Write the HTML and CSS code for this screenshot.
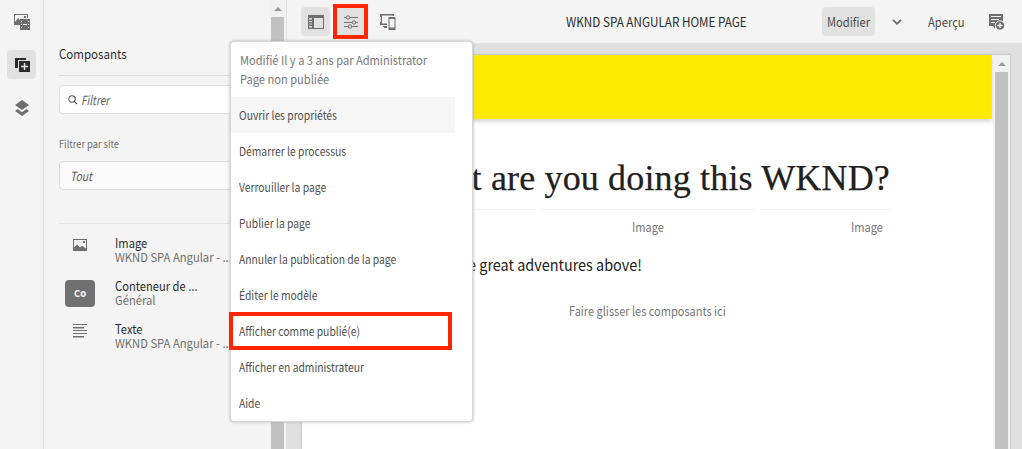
FILE: index.html
```html
<!DOCTYPE html>
<html lang="fr">
<head>
<meta charset="utf-8">
<title>WKND SPA Angular Home Page</title>
<link rel="stylesheet" href="styles.css">
</head>
<body>
<div class="app">
  <nav class="rail">
    <button class="rail-btn"><svg width="16" height="16" viewBox="0 0 16 16"><path fill="#6e6e6e" fill-rule="evenodd" d="M0 0h14v4h-1V1H1v7l3-4 2 2v5H0zM10 2h2v2h-2z"/><path fill="#6e6e6e" fill-rule="evenodd" d="M6 5h10v11H6zM7 7v1h1V7zm0 3v1h1v-1zm0 3v1h1v-1zm7-6v1h1V7zm0 3v1h1v-1zm0 3v1h1v-1zM9 10v1h4v-1z"/></svg></button>
    <button class="rail-btn rail-active"><svg width="16" height="16" viewBox="0 0 16 16"><path fill="#2c2c2c" d="M1 1h11v2H4v8H1z"/><path fill="#2c2c2c" fill-rule="evenodd" d="M5 4h11v11H5zM9.800 6v2.800H7v1.500h2.800v2.800h1.500v-2.800h2.800V8.800h-2.800V6z"/></svg></button>
    <button class="rail-btn"><svg width="16" height="16" viewBox="0 0 16 16"><path fill="#6e6e6e" d="M8 0l7 5-7 5-7-5zM3.500 9L8 12.200 12.500 9 15 11l-7 5-7-5z"/></svg></button>
  </nav>

  <aside class="panel">
    <div class="panel-body">
      <h2 class="panel-title"><span class="narrow">Composants</span></h2>
      <div class="field search"><svg width="10" height="10" viewBox="0 0 10 10" fill="none" stroke="#555" stroke-width="1.100"><circle cx="4" cy="4" r="3.200"/><path d="M6.300 6.300L9 9"/></svg><span class="narrow">Filtrer</span></div>
      <label class="label"><span class="narrow">Filtrer par site</span></label>
      <div class="field select"><span class="narrow">Tout</span></div>
      <ul class="components">
        <li class="component"><span class="thumb"><svg width="14" height="12" viewBox="0 0 14 12"><path fill="#6e6e6e" fill-rule="evenodd" d="M0 0h14v12H0zM1 1v8l3-3.500 3 3 2-1.500 4 2.500V1zM10 2h2v2h-2z"/><path fill="#6e6e6e" d="M1 8.500l3-3 3 3 2-1.500 4 3v1H1z"/></svg></span><span class="meta"><b class="narrow">Image</b><i class="narrow">WKND SPA Angular - ...</i></span></li>
        <li class="component"><span class="thumb chip">Co</span><span class="meta"><b class="narrow">Conteneur de ...</b><i class="narrow">Général</i></span></li>
        <li class="component"><span class="thumb"><svg width="14" height="14" viewBox="0 0 14 14" fill="#6e6e6e"><path d="M0 0h14v1H0zM0 3h11v1.500H0zM0 6h14v1H0zM0 9h14v1H0zM0 12h11v1.500H0z"/></svg></span><span class="meta"><b class="narrow">Texte</b><i class="narrow">WKND SPA Angular - ...</i></span></li>
      </ul>
    </div>
    <div class="scroll"><span class="arrow"></span><span class="grip"></span></div>
  </aside>

  <section class="main">
    <header class="bar">
      <div class="tools">
        <button class="tool tool-on"><svg width="16" height="14" viewBox="0 0 16 14"><path fill="#6e6e6e" fill-rule="evenodd" d="M0 0h16v14H0zM1 3v1.500h3V3zm0 3v1h3V6zm0 2.500v1h3v-1zM1 11v1.500h3V11zM6 3v10h9V3z"/></svg></button>
        <button class="tool tool-on tool-marked"><svg width="15" height="14" viewBox="0 0 15 14" fill="#e1e1e1" stroke="#707070"><path d="M1 2.500h14M1 7.500h14M1 11.500h14"/><circle cx="5" cy="2.500" r="1.700"/><circle cx="11" cy="7.500" r="1.700"/><circle cx="7" cy="11.500" r="1.700"/></svg></button>
        <button class="tool tool-devices"><svg width="17" height="17" viewBox="0 0 17 17"><path fill="#6e6e6e" d="M1 1h14v2h-1.500v-.5H3v8h5V12H1V9h.8V4H1zM4 13h4v2H5v-1H4z"/><path fill="#6e6e6e" fill-rule="evenodd" d="M9.500 4h7v13h-7zM10.500 6v8.500h5V6z"/></svg></button>
      </div>
      <h1 class="page-title"><span class="narrow">WKND SPA ANGULAR HOME PAGE</span></h1>
      <div class="modes">
        <button class="mode mode-on"><span class="narrow">Modifier</span></button>
        <svg class="chev" width="10" height="6" viewBox="0 0 10 6" fill="none" stroke="#6e6e6e" stroke-width="1.800"><path d="M1 .8l4 4 4-4"/></svg>
        <span class="preview narrow">Aperçu</span>
        <svg class="note" width="16" height="17" viewBox="0 0 16 17"><path fill="#6e6e6e" d="M0 0h14v8H9v4H6v3L4 12H0z"/><path stroke="#f4f4f4" d="M2 2.500h10M2 5.500h8M2 8.500h4"/><circle cx="11" cy="11.500" r="4.700" fill="#6e6e6e" stroke="#f4f4f4"/><path stroke="#f4f4f4" stroke-width="1.300" d="M8.500 11.500h5M11 9v5"/></svg>
      </div>
    </header>
    <div class="stage">
      <div class="frame">
        <article class="content">
          <div class="banner"></div>
          <h1 class="headline">t are you doing this WKND?</h1>
          <div class="images"><div></div><div><span class="narrow">Image</span></div><div><span class="narrow">Image</span></div></div>
          <p class="copy"><span class="narrow">e great adventures above!</span></p>
          <p class="drop"><span class="narrow">Faire glisser les composants ici</span></p>
        </article>
        <div class="scroll frame-scroll"><span class="arrow"></span><span class="grip"></span></div>
      </div>
    </div>
  </section>

  <div class="menu">
    <p class="menu-info"><span class="narrow">Modifié Il y a 3 ans par Administrator</span><span class="narrow">Page non publiée</span></p>
    <ul class="menu-list">
      <li class="hovered"><span class="narrow">Ouvrir les propriétés</span></li>
      <li><span class="narrow">Démarrer le processus</span></li>
      <li><span class="narrow">Verrouiller la page</span></li>
      <li><span class="narrow">Publier la page</span></li>
      <li><span class="narrow">Annuler la publication de la page</span></li>
      <li><span class="narrow">Éditer le modèle</span></li>
      <li class="marked"><span class="narrow">Afficher comme publié(e)</span></li>
      <li><span class="narrow">Afficher en administrateur</span></li>
      <li><span class="narrow">Aide</span></li>
    </ul>
  </div>
</div>
</body>
</html>
```
FILE: styles.css
```css
* { box-sizing: border-box; }
body, h1, h2, p, ul { margin: 0; padding: 0; }
ul { list-style: none; }
body { font-family: "Noto Sans CJK SC", "Noto Sans", sans-serif; font-size: 13px; color: #4b4b4b; background: #f4f4f4; overflow: hidden; }
button { border: 0; padding: 0; background: none; font: inherit; color: inherit; }
svg { display: block; flex: none; }
/* Condensed setting of the interface typeface */
.narrow { display: block; width: max-content; white-space: nowrap; transform: scaleX(var(--narrow, .86)); transform-origin: left center; }
.app { position: relative; display: flex; width: 1022px; height: 449px; overflow: hidden; }

.rail { width: 44px; border-right: 1px solid #dfdfdf; padding-top: 7px; display: flex; flex-direction: column; align-items: center; gap: 14px; }
.rail-btn { width: 29px; height: 29px; border-radius: 4px; display: flex; align-items: center; justify-content: center; }
.rail-active { background: #e1e1e1; }

.panel { width: 243px; border-right: 1px solid #e0e0e0; display: flex; }
.panel-body { width: 226px; padding-left: 15px; }
.panel-title { --narrow: .885; height: 76px; padding-top: 44px; font-size: 13px; font-weight: 400; line-height: 20px; color: #2c2c2c; border-bottom: 1px solid #dedede; }
.field { --narrow: .83; height: 29px; border: 1px solid #dcdcdc; border-radius: 4px; display: flex; align-items: center; font-size: 12.5px; font-style: italic; line-height: 20px; color: #606060; }
.search { --narrow: .8; margin-top: 9px; padding-left: 8px; gap: 3px; background: #fff; }
.label { --narrow: .91; display: block; margin-top: 21px; font-size: 10.2px; line-height: 18px; color: #6e6e6e; }
.select { margin-top: 8px; padding-left: 10px; background: #fafafa; }
.components { margin-top: 33px; border-top: 1px solid #e4e4e4; padding-top: 4px; }
.component { height: 43px; display: flex; align-items: center; gap: 20px; }
.thumb { width: 30px; height: 27px; margin-left: 6px; padding-bottom: 9px; display: flex; align-items: center; justify-content: center; }
.chip { margin-top: 1px; padding-bottom: 0; background: #707070; border-radius: 4px; color: #fff; font-size: 9.5px; font-weight: 700; }
.meta { display: flex; flex-direction: column; line-height: 14px; color: #6e6e6e; font-size: 12.2px; width: 120px; }
.meta b { --narrow: .86; font-weight: 400; color: #2c2c2c; font-size: 13px; }
.meta i { --narrow: .92; font-style: normal; }
.scroll { width: 15px; background: #f1f1f1; display: flex; flex-direction: column; align-items: center; }
.arrow { margin-top: 7px; border: 4px solid transparent; border-top: 0; border-bottom: 4px solid #9a9a9a; }
.grip { width: 13px; flex: 1; margin-top: 6px; background: #c1c1c1; }

.main { flex: 1; display: flex; flex-direction: column; }
.bar { height: 43px; display: flex; align-items: flex-start; }
.tools { width: 279px; padding: 4px 0 0 14px; display: flex; }
.tool { width: 29px; height: 29px; margin-top: 3px; border-radius: 4px; display: flex; align-items: center; justify-content: center; }
.tool-on { background: #e1e1e1; }
.tools .tool-marked { width: 35px; height: 35px; margin: 0 0 0 3px; border: 4px solid #fe2600; border-radius: 0; }
.tools .tool-devices { margin-left: 5px; }
.page-title { --narrow: .935; width: 256px; padding-top: 12px; font-size: 12.5px; font-weight: 400; line-height: 20px; color: #2c2c2c; }
.modes { --narrow: .86; display: flex; align-items: center; padding-top: 7px; font-size: 13px; }
.mode { width: 53px; height: 29px; padding-left: 5px; border-radius: 4px; }
.mode-on { background: #e1e1e1; }
.chev { margin-left: 17px; }
.modes .preview { width: 61px; margin-left: 26px; line-height: 20px; }
.note { margin-top: 2px; }
.stage { flex: 1; background: #e0e0e0; padding: 12px 12px 0 15px; display: flex; }
.frame { flex: 1; display: flex; background: #fff; box-shadow: 0 0 2px #999; }
.content { width: 691px; height: 394px; }
.banner { width: 690px; height: 64px; background: #ffea00; box-shadow: 0 2px 5px #ccc; }
.headline { height: 90px; margin-right: 103px; padding-top: 40px; font: 400 36px/38px "Liberation Serif", serif; letter-spacing: .16px; -webkit-text-stroke: .25px #202020; color: #202020; text-align: right; white-space: nowrap; }
.images { --narrow: .85; display: grid; grid-template-columns: 216px 216px 132px; gap: 3px; margin-left: 19px; line-height: 20px; color: #777; }
.images div { border-top: 1px solid #f4f4f4; padding-top: 7px; padding-left: 92px; height: 38px; }
.copy { --narrow: .93; display: flex; justify-content: flex-end; width: 340px; margin-top: 7px; font-size: 15.5px; line-height: 20px; color: #202020; }
.copy .narrow { transform-origin: right center; }
.drop { --narrow: .845; margin: 27px 0 0 267px; line-height: 20px; color: #777; }
.frame-scroll { width: 17px; }

.menu { position: absolute; left: 230px; top: 41px; width: 243px; height: 381px; background: #fff; border: 1px solid #d7d7d7; border-radius: 4px; box-shadow: 0 0 3px #aaa; color: #4f4f4f; font-size: 12px; }
.menu-info { --narrow: .925; height: 55px; padding: 8px 0 0 9px; line-height: 19px; color: #777; }
.menu-list li { width: 224px; height: 36px; padding-left: 8px; line-height: 36px; }
.menu-list .hovered { background: #f6f6f6; }
.menu-list .marked { width: 223px; height: 38px; margin: -1px 0 -1px -2px; padding-left: 6px; border: 4px solid #fe2600; line-height: 30px; }
```
